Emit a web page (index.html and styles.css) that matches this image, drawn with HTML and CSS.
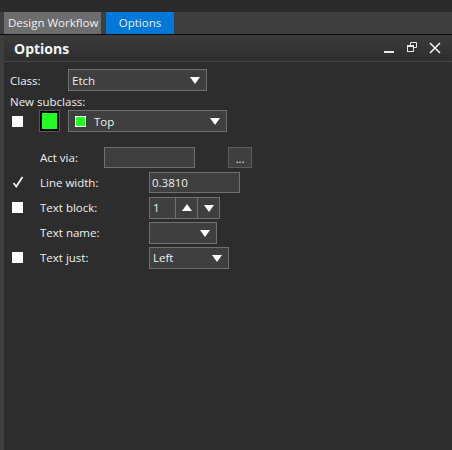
FILE: index.html
```html
<!DOCTYPE html>
<html>
<head>
<meta charset="utf-8">
<link rel="stylesheet" href="styles.css">
</head>
<body>
<div class="app">
  <div class="topstrip"></div>
  <div class="tabbar">
    <div class="tab tab-gray">Design Workflow</div>
    <div class="tab tab-blue">Options</div>
  </div>
  <div class="main">
    <div class="leftstrip"></div>
    <div class="panel">
      <div class="header">
        <span class="title">Options</span>
        <div class="hicons">
          <svg class="hicon" width="12" height="12" viewBox="0 0 12 12"><rect x="1" y="9" width="10" height="2" fill="#e8e8e8"/></svg>
          <svg class="hicon" width="12" height="12" viewBox="0 0 12 12"><path d="M4.5 3.5V0.5H10.5V5.5H7.5" fill="none" stroke="#e8e8e8" stroke-width="1"/><rect x="1.5" y="3.5" width="6" height="6" fill="none" stroke="#e8e8e8" stroke-width="1"/><rect x="1" y="3" width="7" height="2" fill="#e8e8e8"/></svg>
          <svg class="hicon" width="12" height="12" viewBox="0 0 12 12"><path d="M1 1L11 11M11 1L1 11" stroke="#f0f0f0" stroke-width="1.6"/></svg>
        </div>
      </div>
      <div class="content">
        <div class="row row-class">
          <span class="lbl">Class:</span>
          <div class="combo w-class"><span>Etch</span><span class="arrow"></span></div>
        </div>
        <div class="row row-sublabel"><span class="lbl">New subclass:</span></div>
        <div class="row row-sub">
          <span class="chk"></span>
          <span class="swatch"></span>
          <div class="combo w-sub"><span class="mini"></span><span class="top">Top</span><span class="arrow"></span></div>
        </div>
        <div class="row row-act">
          <span class="lbl">Act via:</span>
          <div class="field w-act"></div>
          <div class="btn-dots">...</div>
        </div>
        <div class="row row-opt">
          <span class="chkcell"><svg width="12" height="13" viewBox="0 0 12 13"><path d="M1.5 7L4.3 10.5L10.5 1" fill="none" stroke="#f2f2f2" stroke-width="1.8"/></svg></span>
          <span class="lbl">Line width:</span>
          <div class="field w-line">0.3810</div>
        </div>
        <div class="row row-opt">
          <span class="chkcell"><span class="chk"></span></span>
          <span class="lbl">Text block:</span>
          <div class="spin">
            <div class="spin-val">1</div>
            <div class="spin-btn"><span class="arrow-up"></span></div>
            <div class="spin-btn"><span class="arrow"></span></div>
          </div>
        </div>
        <div class="row row-opt">
          <span class="chkcell"></span>
          <span class="lbl">Text name:</span>
          <div class="combo w-name"><span></span><span class="arrow"></span></div>
        </div>
        <div class="row row-opt">
          <span class="chkcell"><span class="chk"></span></span>
          <span class="lbl">Text just:</span>
          <div class="combo w-just"><span>Left</span><span class="arrow"></span></div>
        </div>
      </div>
    </div>
  </div>
</div>
</body>
</html>
```

FILE: styles.css
```css
* { box-sizing: border-box; }
html, body { margin: 0; padding: 0; }
body {
  background: #2d2d2d;
  font-family: "Open Sans", "Noto Sans", sans-serif;
  font-size: 11.5px;
  color: #f0f0f0;
  width: 452px;
  height: 450px;
  overflow: hidden;
}
.app { display: flex; flex-direction: column; height: 450px; }
.topstrip { height: 12px; background: #2b2b2b; flex: none; }
.tabbar {
  height: 23px;
  flex: none;
  background: #3e3e3e;
  border-bottom: 1px solid #0c0c0c;
  display: flex;
  padding-left: 4px;
  gap: 5px;
}
.tab {
  height: 22px;
  line-height: 21px;
  font-size: 11.5px;
  color: #f0f0f0;
}
.tab-gray { width: 97px; background: #6d6d6d; padding-left: 4px; }
.tab-blue { width: 68px; background: #0078d7; text-align: center; }
.main { flex: 1; display: flex; }
.leftstrip { width: 4px; background: #3f3f3f; flex: none; }
.panel { flex: 1; display: flex; flex-direction: column; }
.header {
  height: 27px;
  background: linear-gradient(#3b3b3b, #2f2f2f);
  border-bottom: 1px solid #464646;
  display: flex;
  align-items: center;
  padding-left: 10px;
  padding-right: 11px;
}
.title { font-weight: bold; font-size: 14px; color: #f5f5f5; flex: 1; }
.hicons { display: flex; gap: 11px; align-items: center; }
.hicon { display: block; }
.content { padding-left: 6px; }
.row { display: flex; align-items: center; height: 22px; }
.lbl { color: #f0f0f0; white-space: nowrap; }
.row-class { margin-top: 7px; }
.row-class .lbl { width: 58px; }
.row-sublabel { height: 16px; margin-top: 2px; }
.row-sub { margin-top: 1px; }
.chk { display: block; width: 11px; height: 11px; background: #ffffff; }
.row-sub .chk { margin-left: 2px; }
.swatch {
  display: block;
  width: 19px;
  height: 20px;
  margin-left: 17px;
  background: #22ff22;
  border: 2px solid #000;
  outline: 1px solid #555;
}
.combo {
  height: 22px;
  background: #3f3f3f;
  border: 1px solid #707070;
  display: flex;
  align-items: center;
  padding-left: 3px;
  padding-right: 6px;
}
.combo > span:first-child { flex: 1; }
.w-class { width: 139px; }
.w-sub { width: 159px; margin-left: 9px; padding-left: 6px; }
.mini { flex: none !important; width: 11px; height: 11px; border: 1px solid #fff; background: #22ff22; display: block; }
.top { flex: 1; padding-left: 8px; }
.arrow {
  display: block;
  width: 0; height: 0;
  border-left: 5.5px solid transparent;
  border-right: 5.5px solid transparent;
  border-top: 7px solid #ffffff;
  margin-top: 1px;
}
.arrow-up {
  display: block;
  width: 0; height: 0;
  border-left: 5.5px solid transparent;
  border-right: 5.5px solid transparent;
  border-bottom: 7px solid #ffffff;
}
.row-act { margin-top: 15px; height: 21px; }
.row-act .lbl { width: 64px; margin-left: 30px; }
.field {
  height: 21px;
  background: #3f3f3f;
  border: 1px solid #707070;
  padding-left: 2px;
  line-height: 19px;
}
.w-act { width: 91px; }
.btn-dots {
  width: 24px;
  height: 21px;
  margin-left: 33px;
  background: #3f3f3f;
  border: 1px solid #5c5c5c;
  text-align: center;
  line-height: 22px;
  font-size: 11px;
}
.row-opt { margin-top: 4px; height: 21px; }
.chkcell { width: 30px; display: flex; align-items: center; padding-left: 2px; }
.row-opt .lbl { width: 109px; }
.w-line { width: 91px; }
.spin { display: flex; height: 22px; }
.spin-val {
  width: 27px; height: 22px;
  background: #3f3f3f;
  border: 1px solid #707070;
  padding-left: 3px;
  line-height: 20px;
}
.spin-btn {
  width: 22px; height: 22px;
  background: #3f3f3f;
  border: 1px solid #707070;
  border-left: none;
  display: flex; align-items: center; justify-content: center;
}
.w-name { width: 68px; }
.w-just { width: 80px; }
```
